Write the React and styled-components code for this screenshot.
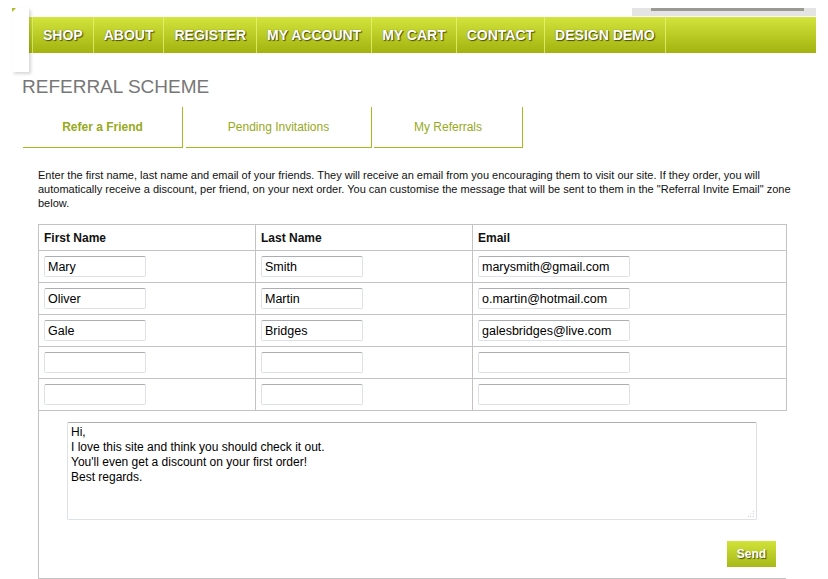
import React from "react";
import styled, { createGlobalStyle } from "styled-components";

const Global = createGlobalStyle`
  html, body { margin: 0; padding: 0; background: #fff; }
  body { font-family: "Liberation Sans", Arial, sans-serif; color: #111; }
  * { box-sizing: border-box; }
`;

const Page = styled.div`
  width: 828px;
  padding: 8px 12px 0 12px;
`;

const Header = styled.header`
  display: flex;
  align-items: flex-start;
  height: 64px;
`;

const Corner = styled.div`
  position: relative;
  width: 17px;
  height: 64px;
  background: #fff;
  box-shadow: 2px 2px 3px rgba(0, 0, 0, 0.16);
  &::before {
    content: "";
    position: absolute;
    left: 0;
    top: 0;
    border-top: 4px solid #a9bd1f;
    border-right: 4px solid transparent;
  }
`;

const HeaderMain = styled.div`
  flex: 1;
  display: flex;
  flex-direction: column;
`;

const TopStrip = styled.div`
  align-self: flex-end;
  width: 184px;
  height: 8px;
  margin-bottom: 1px;
  background: #e4e4e4;
  padding: 0 12px 0 19px;
`;

const TopStripLine = styled.div`
  height: 3px;
  background: #9a9a92;
`;

const Nav = styled.nav`
  display: flex;
  height: 36px;
  padding-left: 3px;
  background: linear-gradient(#d3e43d, #a2b30f);
`;

const NavItem = styled.a`
  display: block;
  padding: 0 10px;
  line-height: 37px;
  font-size: 14px;
  font-weight: bold;
  color: #fff;
  text-decoration: none;
  text-transform: uppercase;
  white-space: nowrap;
  text-shadow: 1px 1px 1px rgba(55, 60, 0, 0.85), 0 0 1px rgba(55, 60, 0, 0.6);
  border-right: 1px solid rgba(232, 245, 120, 0.75);
  &:first-child {
    border-left: 1px solid rgba(232, 245, 120, 0.75);
  }
`;

const Main = styled.main`
  padding-left: 10px;
`;

const Title = styled.h1`
  margin: 4px 0 0 0;
  font-size: 19px;
  line-height: 22px;
  font-weight: normal;
  color: #777;
`;

const Tabs = styled.div`
  display: flex;
  margin: 9px 0 0 1px;
`;

const Tab = styled.div`
  width: ${(p) => p.$w}px;
  margin-right: ${(p) => p.$gap}px;
  height: 41px;
  line-height: 40px;
  text-align: center;
  font-size: 12px;
  font-weight: ${(p) => (p.$active ? "bold" : "normal")};
  color: #97a91c;
  border-right: 1px solid #a6ba1e;
  border-bottom: 1px solid #a6ba1e;
`;

const Body = styled.section`
  padding-left: 16px;
  width: 790px;
`;

const Intro = styled.p`
  margin: 20px 0 0 0;
  width: 772px;
  font-size: 11px;
  line-height: 14px;
  color: #111;
`;

const Grid = styled.table`
  margin-top: 14px;
  width: 748px;
  border-collapse: collapse;
  table-layout: fixed;
`;

const HeadCell = styled.th`
  height: 26px;
  padding: 0 5px;
  text-align: left;
  font-size: 12px;
  font-weight: bold;
  color: #111;
  border: 1px solid #c3c3c3;
`;

const Cell = styled.td`
  height: 32px;
  padding: 0 5px;
  border: 1px solid #c3c3c3;
  vertical-align: middle;
`;

const Field = styled.input`
  display: block;
  width: ${(p) => p.$w}px;
  height: 21px;
  padding: 0 3px;
  font-family: "Liberation Sans", Arial, sans-serif;
  font-size: 12.5px;
  color: #000;
  background: #fff;
  border: 1px solid #dde2e9;
  border-top-color: #abadb3;
  border-radius: 2px;
  outline: none;
`;

const Composer = styled.div`
  display: flex;
  flex-direction: column;
  width: 748px;
  height: 168px;
  padding: 11px 0 0 28px;
  border-left: 1px solid #c3c3c3;
  border-bottom: 1px solid #c3c3c3;
`;

const MessageWrap = styled.div`
  position: relative;
  width: 690px;
  height: 98px;
`;

const Message = styled.textarea`
  display: block;
  width: 690px;
  height: 98px;
  padding: 2px 3px;
  font-family: "Liberation Sans", Arial, sans-serif;
  font-size: 12px;
  line-height: 15px;
  color: #000;
  border: 1px solid #dde2e9;
  border-top-color: #abadb3;
  border-radius: 2px;
  outline: none;
  resize: none;
`;

const Grip = styled.span`
  position: absolute;
  right: 3px;
  bottom: 3px;
  width: 7px;
  height: 7px;
  background:
    radial-gradient(circle, #a8a8a8 0.7px, transparent 0.8px) 0 0 / 2.5px 2.5px;
  clip-path: polygon(100% 0, 100% 100%, 0 100%);
`;

const Actions = styled.div`
  display: flex;
  justify-content: flex-end;
  padding-right: 10px;
  margin-top: 21px;
`;

const SendButton = styled.button`
  width: 49px;
  height: 26px;
  padding: 0;
  border: none;
  background: linear-gradient(#d1e23a, #a7b918);
  color: #fff;
  font-family: "Liberation Sans", Arial, sans-serif;
  font-size: 12px;
  font-weight: bold;
  line-height: 27px;
  text-shadow: 1px 1px 1px rgba(55, 60, 0, 0.85);
  cursor: pointer;
`;

const navItems = ["Shop", "About", "Register", "My Account", "My Cart", "Contact", "Design Demo"];

const rows = [
  ["Mary", "Smith", "marysmith@gmail.com"],
  ["Oliver", "Martin", "o.martin@hotmail.com"],
  ["Gale", "Bridges", "galesbridges@live.com"],
  ["", "", ""],
  ["", "", ""],
];

const message = `Hi,
I love this site and think you should check it out.
You'll even get a discount on your first order!
Best regards.`;

export default function App() {
  return (
    <Page>
      <Global />
      <Header>
        <Corner />
        <HeaderMain>
          <TopStrip>
            <TopStripLine />
          </TopStrip>
          <Nav>
            {navItems.map((n) => (
              <NavItem key={n} href="#">
                {n}
              </NavItem>
            ))}
          </Nav>
        </HeaderMain>
      </Header>
      <Main>
        <Title>REFERRAL SCHEME</Title>
        <Tabs>
          <Tab $w={160} $gap={3} $active>
            Refer a Friend
          </Tab>
          <Tab $w={186} $gap={2}>
            Pending Invitations
          </Tab>
          <Tab $w={149} $gap={0}>
            My Referrals
          </Tab>
        </Tabs>
        <Body>
          <Intro>
            Enter the first name, last name and email of your friends. They will receive an email from you
            encouraging them to visit our site. If they order, you will automatically receive a discount, per
            friend, on your next order. You can customise the message that will be sent to them in the
            "Referral Invite Email" zone below.
          </Intro>
          <Grid>
            <colgroup>
              <col style={{ width: 217 }} />
              <col style={{ width: 217 }} />
              <col style={{ width: 314 }} />
            </colgroup>
            <thead>
              <tr>
                <HeadCell>First Name</HeadCell>
                <HeadCell>Last Name</HeadCell>
                <HeadCell>Email</HeadCell>
              </tr>
            </thead>
            <tbody>
              {rows.map((r, i) => (
                <tr key={i}>
                  <Cell>
                    <Field $w={102} defaultValue={r[0]} />
                  </Cell>
                  <Cell>
                    <Field $w={102} defaultValue={r[1]} />
                  </Cell>
                  <Cell>
                    <Field $w={152} defaultValue={r[2]} />
                  </Cell>
                </tr>
              ))}
            </tbody>
          </Grid>
          <Composer>
            <MessageWrap>
              <Message defaultValue={message} />
              <Grip />
            </MessageWrap>
            <Actions>
              <SendButton>Send</SendButton>
            </Actions>
          </Composer>
        </Body>
      </Main>
    </Page>
  );
}
